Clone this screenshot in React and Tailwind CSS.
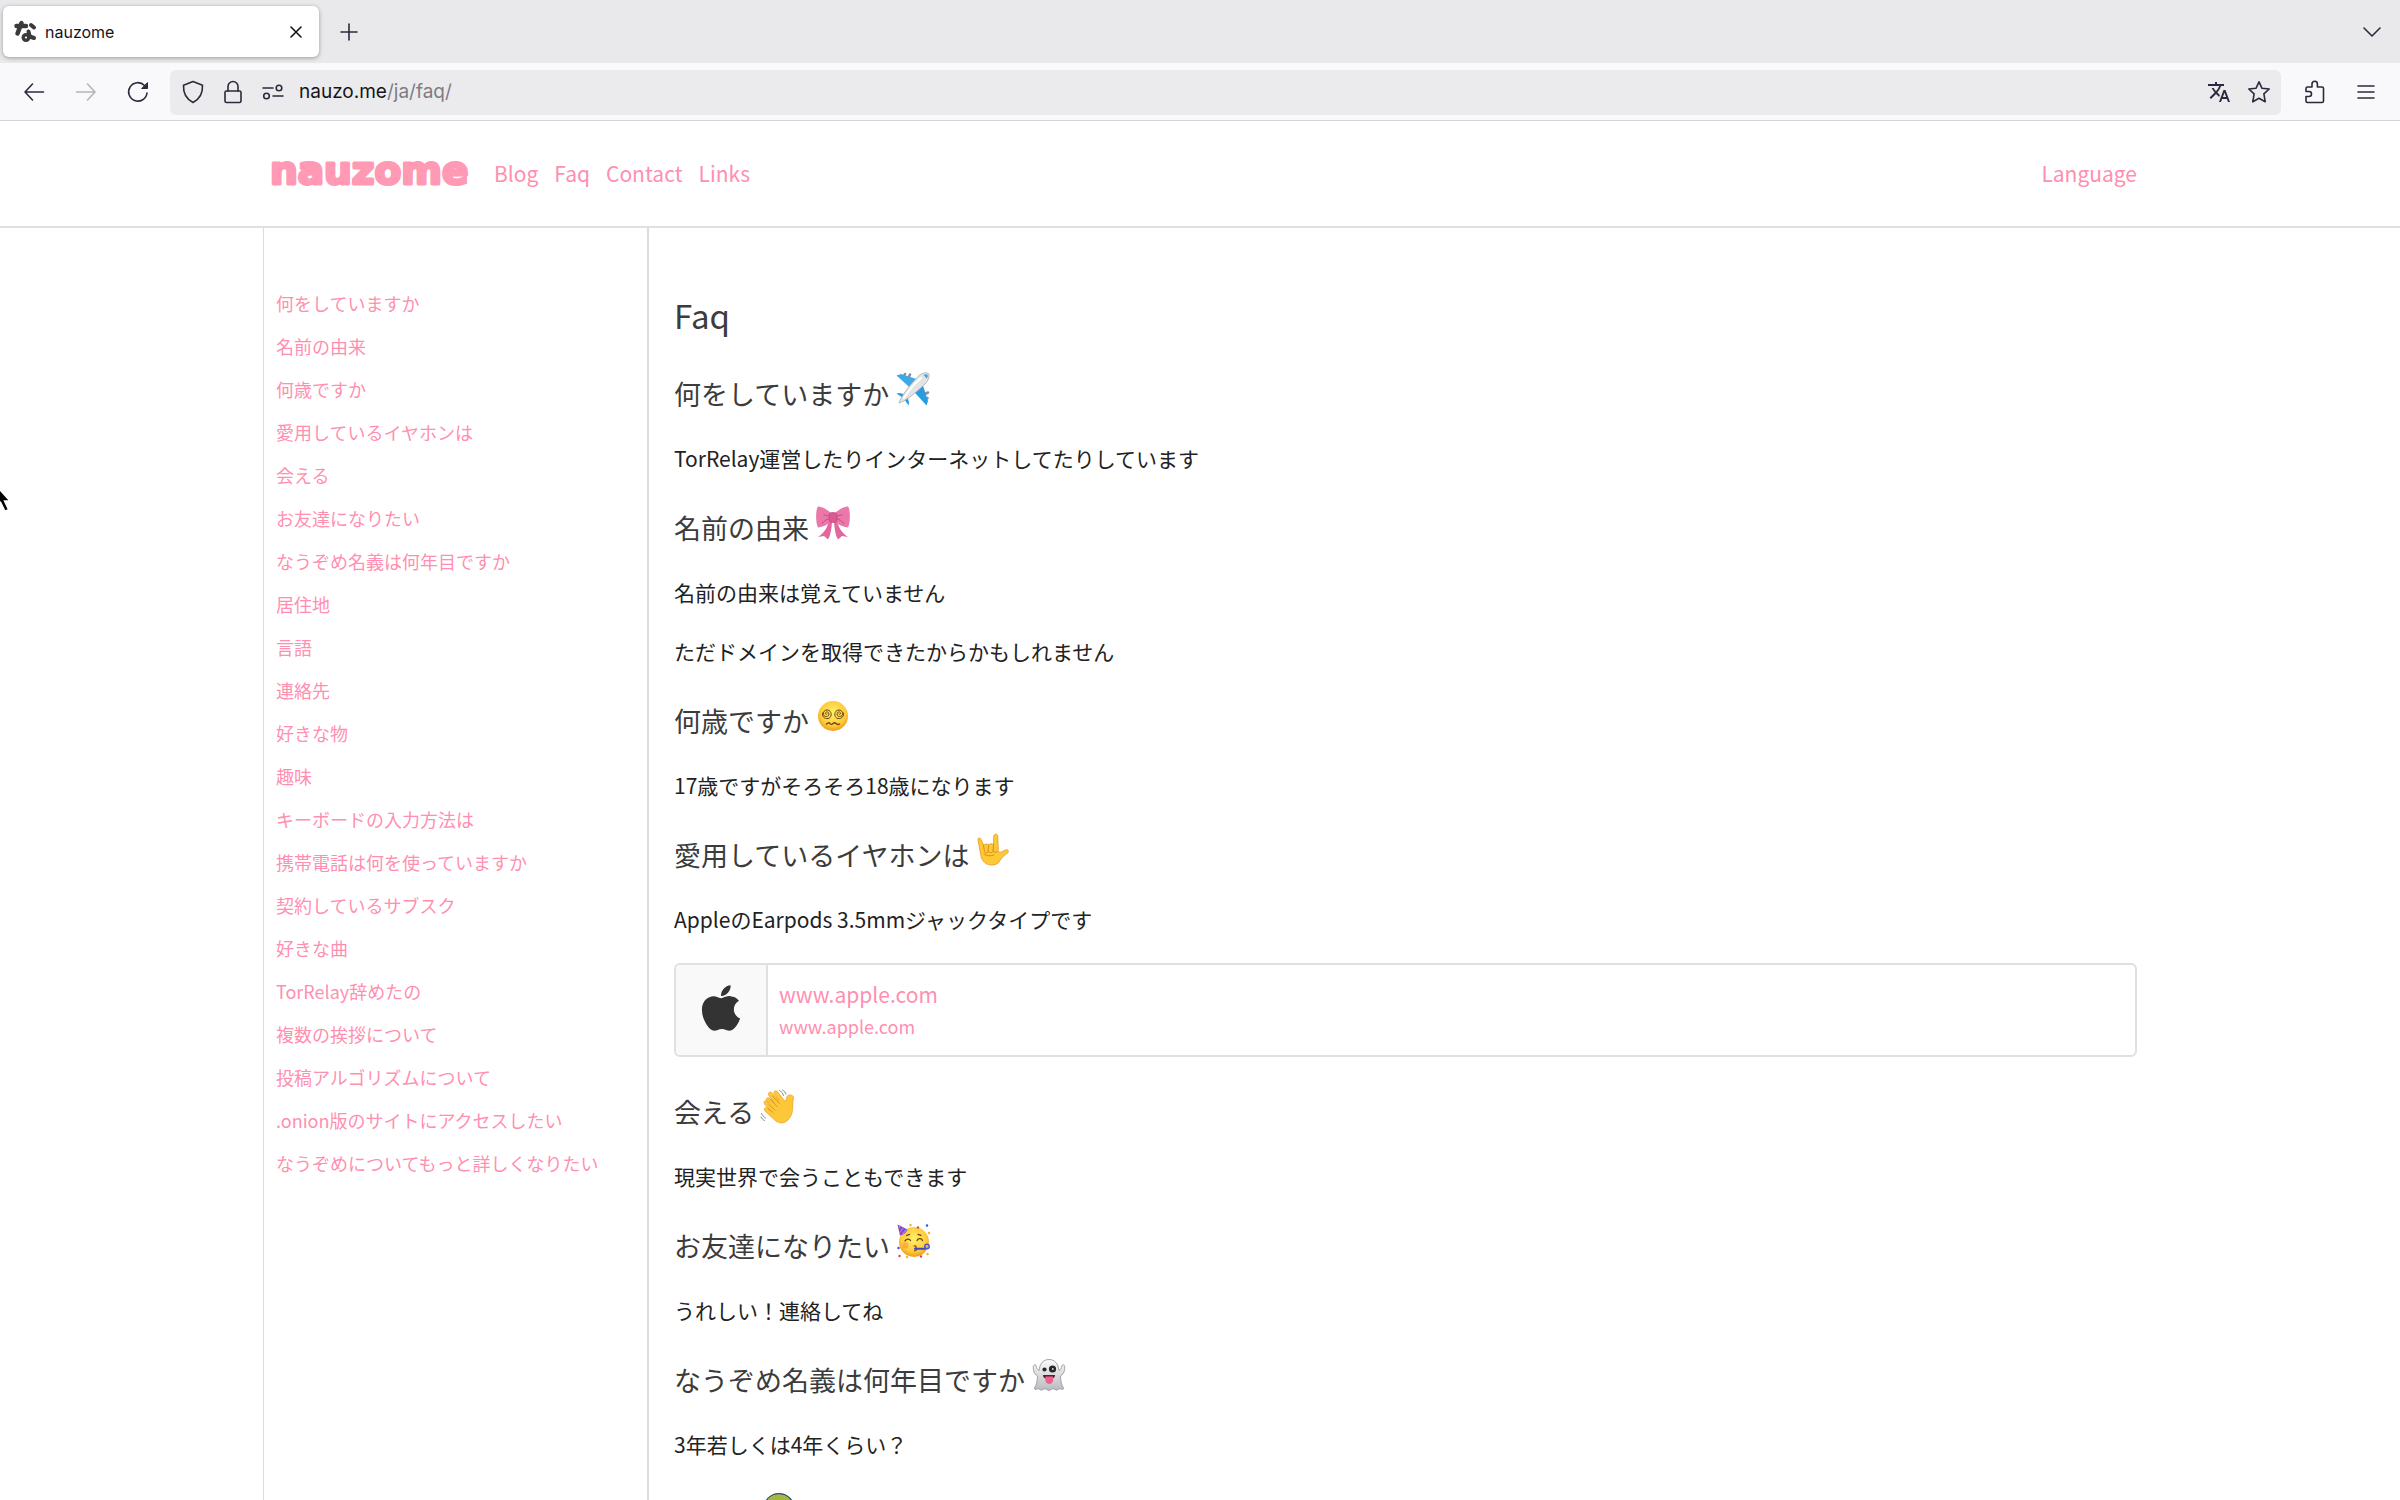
import { FaApple } from 'react-icons/fa';
import { MdTranslate } from 'react-icons/md';

const navLinks = ['Blog', 'Faq', 'Contact', 'Links'];

const toc = [
    '何をしていますか',
    '名前の由来',
    '何歳ですか',
    '愛用しているイヤホンは',
    '会える',
    'お友達になりたい',
    'なうぞめ名義は何年目ですか',
    '居住地',
    '言語',
    '連絡先',
    '好きな物',
    '趣味',
    'キーボードの入力方法は',
    '携帯電話は何を使っていますか',
    '契約しているサブスク',
    '好きな曲',
    'TorRelay辞めたの',
    '複数の挨拶について',
    '投稿アルゴリズムについて',
    '.onion版のサイトにアクセスしたい',
    'なうぞめについてもっと詳しくなりたい',
];

const sections = [
    { title: '何をしていますか', emoji: Airplane, text: ['TorRelay運営したりインターネットしてたりしています'] },
    { title: '名前の由来', emoji: Ribbon, text: ['名前の由来は覚えていません', 'ただドメインを取得できたからかもしれません'] },
    { title: '何歳ですか', emoji: DizzyFace, text: ['17歳ですがそろそろ18歳になります'] },
    { title: '愛用しているイヤホンは', emoji: LoveYouHand, text: ['AppleのEarpods 3.5mmジャックタイプです'], link: 'www.apple.com' },
    { title: '会える', emoji: WavingHand, text: ['現実世界で会うこともできます'] },
    { title: 'お友達になりたい', emoji: PartyFace, text: ['うれしい！連絡してね'] },
    { title: 'なうぞめ名義は何年目ですか', emoji: Ghost, text: ['3年若しくは4年くらい？'] },
    { title: '居住地', emoji: Globe, text: [] },
];

function Emoji({ children }) {
    return (
        <svg className="h-9 w-9 shrink-0" viewBox="0 0 36 36" fill="none" aria-hidden="true">
            {children}
        </svg>
    );
}

function Airplane() {
    return (
        <Emoji>
            <g stroke="#8b8f94" strokeWidth="2.6" strokeLinecap="round">
                <path d="M10 3l-1 2M15 3.500l-1 2" />
                <path d="M33 21.500l-2 1M32.500 27l-2 1" />
            </g>
            <path d="M1.500 4.500l4.500-1.500 18.500 6-7 10z" fill="#3fa9e8" />
            <path d="M31.500 34.500l1.500-4.500-6-18.500-10 7z" fill="#2b9be0" />
            <path d="M1.500 22.500l3-.5 8 2-3 4zM13.500 34.500l.5-3-2-8-4 3z" fill="#2b9be0" />
            <path d="M4 32c2-6 8-15 19-26.500C27 1.500 32 1.200 33.500 2.500s.5 6.500-3.500 10.500C18 24.500 10 30 4 32z" fill="#e4e4e6" stroke="#a9abb0" strokeWidth=".8" />
            <path d="M9 27c5-8 11-15 17-20" stroke="#fff" strokeWidth="2" strokeLinecap="round" />
            <path d="M28.500 3.800c2-.9 3.500-.9 4 0s.3 2.300-.6 4z" fill="#4b9fd4" />
        </Emoji>
    );
}

function Ribbon() {
    return (
        <Emoji>
            <path d="M14 15c-1 7-5 13-11 17l6-1 4 3.500c2.500-4 3.500-10 4-18z" fill="#e2679c" />
            <path d="M22 15c1 7 5 13 11 17l-6-1-4 3.500c-2.500-4-3.500-10-4-18z" fill="#e2679c" />
            <path d="M16 8C12 4.500 7 1.500 3 1.500 .5 4.500.5 18 3 22.500c5-.5 10-3 13-6z" fill="#ec77a9" />
            <path d="M20 8c4-3.500 9-6.500 13-6.500C35.500 4.500 35.500 18 33 22.500c-5-.5-10-3-13-6z" fill="#ec77a9" />
            <path d="M15 11.500c-2.500-1-4-1.500-6-1.500M15 13.500c-3 .5-6 2.500-8 5M21 11.500c2.500-1 4-1.500 6-1.500M21 13.500c3 .5 6 2.500 8 5" stroke="#c94a82" strokeWidth="1" strokeLinecap="round" />
            <rect x="14" y="7.500" width="8" height="10" rx="3" fill="#dc5a92" stroke="#bd3f78" strokeWidth=".6" />
        </Emoji>
    );
}

function FaceShade() {
    return (
        <radialGradient id="face" cx=".5" cy=".4" r=".6">
            <stop offset="0" stopColor="#fff06a" />
            <stop offset=".7" stopColor="#fdcb3a" />
            <stop offset="1" stopColor="#f09a1c" />
        </radialGradient>
    );
}

function DizzyFace() {
    return (
        <Emoji>
            <defs><FaceShade /></defs>
            <circle cx="18" cy="18" r="15" fill="url(#face)" />
            <g stroke="#6b4410" strokeWidth="1" strokeLinecap="round">
                <path d="M12 16c-.8.9-2 0-1.500-1.200.8-1.500 3.500-1 3.500 1.200 0 3-4.500 3.500-5.500.5-1-3.500 3-5.500 5.500-4 3.500 2 2.500 7.500-1 8-4 .6-6-2.500-5.500-5.500" />
                <path d="M24 16c.8.9 2 0 1.500-1.200-.8-1.500-3.500-1-3.500 1.200 0 3 4.500 3.500 5.500.5 1-3.500-3-5.500-5.500-4-3.500 2-2.500 7.500 1 8 4 .6 6-2.500 5.500-5.500" />
                <path d="M11.500 26c1.300-1.500 2.500-1.500 3.500-.4s2 1 3 0 2-1 3 0 2.300 1.200 3.500.4" strokeWidth="1.400" />
            </g>
        </Emoji>
    );
}

function LoveYouHand() {
    return (
        <Emoji>
            <path
                d="M3 8c-.5-2 2-2.800 3-.8l2.500 6c2-1.500 4-1.500 5-.3 1-1.200 3.500-1.400 5-.4L18.800 4c.1-2.500 3.700-2.500 3.900 0l.6 14.500c.3 1.500 1.500 2 3 1.500l4-2c2.500-1 4 1 2.500 2.800-3 2.500-5.500 4-7.500 7.200-1.500 3-4 5-8.300 5-6 0-10-3.500-11-9z"
                fill="#fdc936"
                stroke="#e5981f"
                strokeWidth=".8"
            />
            <path d="M8.500 13l1 6.500c.5 2 3 2 3.500.2l.5-6.700M13.500 19.500c1 1.800 4 1.500 4.500-.5l.6-6.500M18 19c1 1.500 3 2 4.500.5M9 22c3 2.500 7 2 10 1" stroke="#d6851a" strokeWidth=".9" strokeLinecap="round" />
        </Emoji>
    );
}

function WavingHand() {
    return (
        <Emoji>
            <path
                d="M6.500 9.500c1.200-1.300 2.700-.8 3.800.3l3.700 3.700L8.500 6C7.500 3.500 10.500 2 12 4l6.500 7.500-4.500-7c-.8-2.500 2-3.800 3.500-1.800l8 10.300c.5-2.500.8-4.500 1.800-6C28.800 5 34 6 33.500 9c-.9 4-.5 7-1 12.500-.8 6-5 12-10.500 12.500-4 .3-7-2.500-9.500-5L5 22c-1.800-2 .3-4.500 2.500-3l3 2.500-6-6.500c-1.500-2 .5-4.300 2.500-2.800l2 1.800-2.200-2.300c-.6-.7-.7-1.500-.3-2.200z"
                fill="#fdc73a"
                stroke="#eba025"
                strokeWidth=".7"
            />
            <path d="M10 10l7 7.500M12.500 7l7.500 8M9 15.500l6 5.500M8.500 20l4.500 3.500" stroke="#df8f1e" strokeWidth=".9" strokeLinecap="round" />
            <path d="M19.500 1.500c2 1 3.500 3 4 5M22.500 1c2 1.200 3 2.500 3.500 4M1.500 24.500c.8 2 2.200 3.500 4 4.500M1 28c.8 1.700 2 2.700 3.500 3.500" stroke="#7a7a7a" strokeWidth=".9" strokeLinecap="round" />
        </Emoji>
    );
}

function PartyFace() {
    return (
        <Emoji>
            <circle cx="18" cy="19" r="15" fill="url(#face)" />
            <path d="M1.500 1.500l10 5c-1 3-4 5.500-7.500 6z" fill="#5d55d6" />
            <path d="M4 2.800l-1.800 3.500M7.500 4.500L3.500 10M10.500 6.500L6 11.500" stroke="#ef6fb8" strokeWidth="1.200" />
            <path d="M9 18c1-2.500 4.500-2.500 5.500-.5M21 17.500c1-2.500 4.500-2.500 5.500 0M10.500 12.500l3-1.200M22 11.300l3 1" stroke="#6b3d10" strokeWidth="1.300" strokeLinecap="round" />
            <path d="M18 23c2.500-.5 3 1.500 1 2.200 2 0 2.500 2.300-.5 2.600" stroke="#8a4a10" strokeWidth="1.200" strokeLinecap="round" />
            <circle cx="9.500" cy="22.500" r="3" fill="#f58a3c" opacity=".5" />
            <path d="M19 25.800h10" stroke="#3b46c9" strokeWidth="2" strokeLinecap="round" />
            <circle cx="31" cy="23.500" r="2.200" stroke="#4a52d8" strokeWidth="1.500" />
            <path d="M31 2.500h.01M2.500 25h.01" stroke="#3c55e0" strokeWidth="2.500" strokeLinecap="round" />
            <path d="M22 4.500h.01M3.500 33h.01M25 33.500h.01" stroke="#e83e6b" strokeWidth="2.500" strokeLinecap="round" />
            <path d="M14.500 2h.01M33 10h.01M31.500 31h.01M11 34h.01" stroke="#f7b52c" strokeWidth="2.500" strokeLinecap="round" />
        </Emoji>
    );
}

function Ghost() {
    return (
        <Emoji>
            <defs>
                <linearGradient id="ghost" x1="0" y1="0" x2="0" y2="1">
                    <stop offset="0" stopColor="#fafafa" />
                    <stop offset="1" stopColor="#b9bbbe" />
                </linearGradient>
            </defs>
            <path
                d="M18 2.500c6 0 9.500 4.500 9.800 11 1.700-.6 2.700-2.500 3-4.500.3-2 2.700-1.500 2.900.5.5 4-1.200 8-4.200 9.500.2 5 1 9 3 12 .5 1.500-1.500 1.700-3 1-1.500-.8-2.300.8-3.500 1-1.800.3-2.500-1.500-4-1.300-1.500.2-2.500 1.600-4 1.600s-2.500-1.400-4-1.600c-1.500-.2-2.200 1.600-4 1.300-1.200-.2-2-1.800-3.500-1-1.500.7-3.500.5-3-1 2-3 2.800-7 3-12C3.500 17.500 1.800 13.500 2.300 9.500c.2-2 2.600-2.500 2.900-.5.3 2 1.300 3.900 3 4.500C8.500 7 12 2.500 18 2.500z"
                fill="url(#ghost)"
                stroke="#8f9195"
                strokeWidth=".8"
            />
            <circle cx="13.500" cy="12.500" r="2.100" fill="#27272a" />
            <circle cx="21.500" cy="12" r="3.600" fill="#27272a" />
            <circle cx="21.800" cy="12" r=".9" fill="#d8d8da" />
            <path d="M12 18h12c0 2-1 3-2.500 3.500h-7C13 21 12 20 12 18z" fill="#5a1c2c" />
            <path d="M14.500 19.500h7.500v4c0 4.500-7.500 4.500-7.500 0z" fill="#f0608f" />
        </Emoji>
    );
}

function Globe() {
    return (
        <Emoji>
            <circle cx="18" cy="18" r="16" fill="#3f7fc0" />
            <path d="M6 8C9 4.500 13 3 18 3.200 24 3.200 28 6 30 10l-5 4-8-2-4 5-6-2z" fill="#a3b83c" />
            <circle cx="18" cy="18" r="15.500" stroke="#3b4c66" strokeWidth="1" />
        </Emoji>
    );
}

// Rounded hiragana mark used as the favicon
function Favicon() {
    return (
        <svg className="h-6 w-6" viewBox="0 0 24 24" fill="none" stroke="#3a3a3c" strokeLinecap="round" strokeLinejoin="round" aria-hidden="true">
            <path d="M3.500 6h9.500M8.500 3L4.500 13.500" strokeWidth="4.500" />
            <path d="M18 5l3 2.500" strokeWidth="4" />
            <path d="M15.500 11.500l1.300 5 4.200 1.500" strokeWidth="4" />
            <circle cx="13" cy="17.500" r="2.800" strokeWidth="3.400" />
        </svg>
    );
}

function ToolbarIcon({ children }) {
    return (
        <svg className="h-6 w-6" viewBox="0 0 24 24" fill="none" stroke="currentColor" strokeWidth="1.6" strokeLinecap="round" strokeLinejoin="round" aria-hidden="true">
            {children}
        </svg>
    );
}

function BrowserChrome() {
    return (
        <div className="shrink-0 font-[Inter,sans-serif] text-[#2b2a3d]">
            <div className="flex h-[63px] items-center justify-between bg-[#e9e9eb] pr-4 pl-[3px]">
                <div className="flex items-center gap-[18px]">
                    <div className="flex h-[51px] w-[316px] items-center gap-2 rounded-md bg-white pr-[11px] pl-[10px] shadow-[0_1px_4px_rgba(0,0,0,0.35)]">
                        <Favicon />
                        <span className="flex-1 text-base text-[#15141a]">nauzome</span>
                        <button type="button" aria-label="Close tab" className="text-[#15141a]">
                            <ToolbarIcon><path d="M7 7l10 10M17 7L7 17" /></ToolbarIcon>
                        </button>
                    </div>
                    <button type="button" aria-label="New tab">
                        <ToolbarIcon><path d="M12 4v16M4 12h16" /></ToolbarIcon>
                    </button>
                </div>
                <button type="button" aria-label="List all tabs">
                    <ToolbarIcon><path d="M4 8l8 8 8-8" /></ToolbarIcon>
                </button>
            </div>
            <div className="flex h-[58px] items-center border-b border-[#d5d5d9] bg-[#f9f9fb] px-[22px] pt-px">
                <div className="flex items-center gap-7">
                    <button type="button" aria-label="Back">
                        <ToolbarIcon><path d="M21.500 12H3M10.500 4L3 12l7.500 8" /></ToolbarIcon>
                    </button>
                    <button type="button" aria-label="Forward" className="text-[#b4b4bb]">
                        <ToolbarIcon><path d="M2.500 12H21M13.500 4L21 12l-7.500 8" /></ToolbarIcon>
                    </button>
                    <button type="button" aria-label="Reload">
                        <ToolbarIcon>
                            <path d="M21 13A9.200 9.200 0 1 1 18.500 5.500" />
                            <path d="M21.500 3v5.500H16z" fill="currentColor" strokeWidth="1" />
                        </ToolbarIcon>
                    </button>
                </div>
                <div className="mr-[22px] ml-5 flex h-[45px] flex-1 items-center rounded-md bg-[#ebebed] pr-[10px] pl-[11px]">
                    <div className="mr-[14px] flex items-center gap-4">
                        <ToolbarIcon><path d="M12 1.500l9.500 3.800c.3 7-2.500 13.700-9.500 17.200C5 19 2.200 12.300 2.500 5.300z" /></ToolbarIcon>
                        <ToolbarIcon>
                            <rect x="4" y="11" width="16" height="11.500" rx="1.500" />
                            <path d="M7 11V6.500a5 5 0 0 1 10 0V11" />
                        </ToolbarIcon>
                        <ToolbarIcon>
                            <path d="M2 8h10M12 16h10" />
                            <circle cx="18" cy="8" r="2.800" />
                            <circle cx="5.500" cy="16" r="2.800" />
                        </ToolbarIcon>
                    </div>
                    <label htmlFor="address" className="text-[19px] text-[#15141a]">nauzo.me</label>
                    <input id="address" type="text" defaultValue="/ja/faq/" className="min-w-0 flex-1 bg-transparent text-[19px] text-[#7d7c84] outline-none" />
                    <div className="flex items-center gap-4">
                        <button type="button" aria-label="Translate page"><MdTranslate className="h-6 w-6" /></button>
                        <button type="button" aria-label="Bookmark this page">
                            <ToolbarIcon><path d="M12 1.800l2.900 6.400 7.300.8-5.300 4.900 1.300 7.900L12 18.300l-6.200 3.500 1.300-7.900L1.800 9l7.300-.8z" /></ToolbarIcon>
                        </button>
                    </div>
                </div>
                <div className="flex items-center gap-[27px]">
                    <button type="button" aria-label="Extensions">
                        <ToolbarIcon><path d="M3 8.500a1.500 1.500 0 0 1 1.500-1.500H9V4a2.700 2.700 0 0 1 5.400 0v3H19a1.500 1.500 0 0 1 1.500 1.500V21a1.500 1.500 0 0 1-1.500 1.500H4.500A1.500 1.500 0 0 1 3 21v-4.500h3a2.500 2.500 0 0 0 0-5H3z" /></ToolbarIcon>
                    </button>
                    <button type="button" aria-label="Open application menu">
                        <ToolbarIcon><path d="M4 6h16M4 12h16M4 18h16" /></ToolbarIcon>
                    </button>
                </div>
            </div>
        </div>
    );
}

function Logo() {
    return (
        <a href="#home">
            <svg className="h-12 w-[208px]" viewBox="0 0 208 48">
                <text x="0" y="34" fill="#ff99b4" stroke="#ff99b4" strokeWidth="3" strokeLinejoin="round" className="font-['DejaVu_Sans',sans-serif] text-[39px] font-bold">nauzome</text>
            </svg>
        </a>
    );
}

function SiteHeader() {
    return (
        <header className="shrink-0 border-b-2 border-[#dfdfe4]">
            <div className="mx-auto flex h-[105px] max-w-[1874px] items-center justify-between pl-[7px] text-[21px] text-[#ff8fb0]">
                <nav className="flex items-center gap-4">
                    <Logo />
                    {navLinks.map((label) => (
                        <a key={label} href={`#${label.toLowerCase()}`}>{label}</a>
                    ))}
                </nav>
                <button type="button">Language</button>
            </div>
        </header>
    );
}

function LinkCard({ host }) {
    return (
        <a href={`https://${host}/`} className="mt-[26px] mb-8 flex h-[94px] overflow-hidden rounded-md border-2 border-[#dfdfe4] text-[#ff8fb0]">
            <span className="flex w-[92px] items-center justify-center border-r-2 border-[#dfdfe4] bg-[#f9f9f9] pb-1">
                <FaApple className="h-[52px] w-[52px] text-[#333]" />
            </span>
            <span className="flex flex-col justify-center px-[11px]">
                <span className="text-[21px] leading-8">{host}</span>
                <span className="text-lg leading-8">{host}</span>
            </span>
        </a>
    );
}

function Section({ title, emoji: Icon, text, link }) {
    return (
        <section>
            <h2 className="mt-[29px] mb-[23px] flex items-start gap-[6px] text-[27px] leading-[46px] text-[#3c3c3c]">
                {title}
                <Icon />
            </h2>
            {text.map((line) => (
                <p key={line} className="my-[23px] text-[21px] leading-9 text-[#222]">{line}</p>
            ))}
            {link && <LinkCard host={link} />}
        </section>
    );
}

export default function App() {
    return (
        <div lang="ja" className="relative flex h-screen flex-col overflow-hidden bg-white font-['Noto_Sans_CJK_JP',sans-serif]">
            <BrowserChrome />
            <SiteHeader />
            <div className="mx-auto flex min-h-0 w-full max-w-[1874px] flex-1 overflow-hidden">
                <aside className="w-[386px] shrink-0 border-r-2 border-l border-[#dcdce0] px-3 pt-[62px]">
                    <ul className="flex flex-col gap-4 text-lg leading-[27px] whitespace-nowrap text-[#ff8fb0]">
                        {toc.map((item) => (
                            <li key={item}><a href={`#${item}`}>{item}</a></li>
                        ))}
                    </ul>
                </aside>
                <main className="min-w-0 flex-1 pt-16 pl-[25px]">
                    <h1 className="mb-[33px] text-[33px] leading-[46px] text-[#3c3c3c]">Faq</h1>
                    {sections.map((section) => (
                        <Section key={section.title} {...section} />
                    ))}
                </main>
            </div>
            {/* mouse pointer, half off the left edge */}
            <svg className="absolute top-[484px] left-0 h-7 w-3" viewBox="0 0 12 28" aria-hidden="true">
                <path d="M-6 -1L10 17H4.500l4 8.500-3.500 1.800-4.500-9-6 5z" fill="#000" stroke="#fff" strokeWidth="1.500" />
            </svg>
        </div>
    );
}
